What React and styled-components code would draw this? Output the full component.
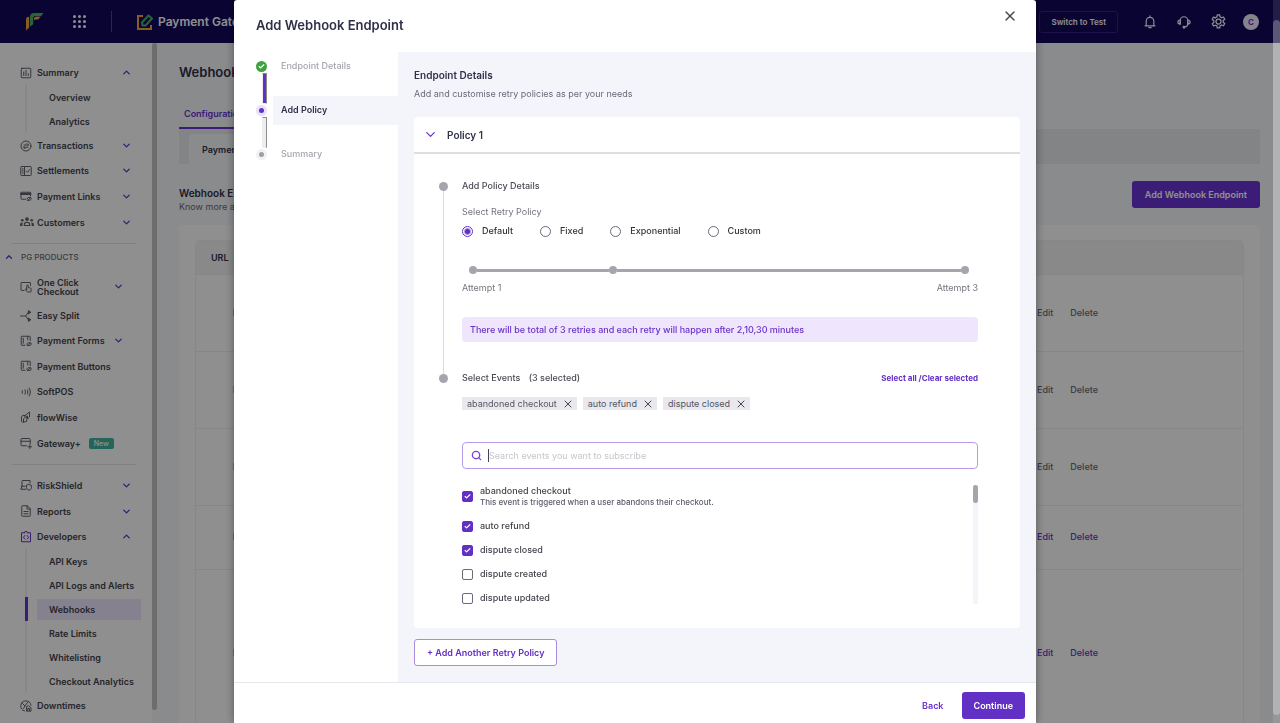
import React, { useState } from "react";
import styled, { createGlobalStyle, css } from "styled-components";
import { Check, ChevronDown, ChevronUp, Search, X } from "lucide-react";

const GlobalStyle = createGlobalStyle`
  *, *::before, *::after {
    box-sizing: border-box;
  }
  body {
    margin: 0;
    overflow: hidden;
    font-family: "Inter", "Liberation Sans", sans-serif;
    font-size: 9px;
    color: #30304a;
  }
  button, input {
    font-family: inherit;
  }
  h1, h2, h3, h4, p, ul, ol {
    margin: 0;
    padding: 0;
  }
  ul, ol {
    list-style: none;
  }
`;

const shapes = {
  summary: (
    <>
      <rect x="2.5" y="2.5" width="19" height="19" rx="1.5" />
      <path d="M7.5 10v7M12 7v10M16.5 13.5V17" />
    </>
  ),
  transactions: (
    <>
      <circle cx="12" cy="12" r="10" />
      <path d="M8 10h8.500M14 7l3 3-1 1M16 14.500H7.500M10 17.500l-3-3 1-1" />
    </>
  ),
  settlements: (
    <>
      <rect x="1.500" y="3" width="21" height="18" rx="1.5" />
      <path d="M9 3v18M4.500 8h2M4.500 12h2M4.500 16h2M12.500 12l2.500 2.500L19 9.500" />
    </>
  ),
  links: (
    <>
      <path d="M11 18.500H3a1 1 0 0 1-1-1V4.500h19V12" />
      <path d="M2 8h19" strokeWidth="4" />
      <path d="M14 18a3 3 0 0 1 3-3h4M22 16a3 3 0 0 1-3 4.500h-4M15.500 21.500l5-6" />
    </>
  ),
  customers: (
    <g fill="currentColor" stroke="none">
      <circle cx="12" cy="7" r="3.200" />
      <circle cx="4" cy="9" r="2.300" />
      <circle cx="20" cy="9" r="2.300" />
      <path
        fillRule="evenodd"
        d="M6.500 19v-3.500c0-2.600 2.500-4 5.500-4s5.500 1.400 5.500 4V19zm2-2h7v-1.500c0-1.200-1.600-2-3.500-2s-3.500.8-3.500 2z"
      />
      <path d="M0 19v-2.500c0-2.200 2-3.700 5-3.500-.7.8-.9 2-.9 3v3zM24 19v-2.500c0-2.200-2-3.700-5-3.500.7.8.9 2 .9 3v3z" />
    </g>
  ),
  click: (
    <>
      <path d="M8 19H3a1 1 0 0 1-1-1V4a1 1 0 0 1 1-1h17a1 1 0 0 1 1 1v5" />
      <path d="M13.500 17V9.500a1.500 1.500 0 0 1 3 0V13l5 1.500c1 .3 1.300 1 1 2l-1 5.500H15l-4.500-5 1-1z" />
    </>
  ),
  split: (
    <>
      <path d="M1 12h10M19 4.500h-2c-3 0-3 7.500-6 7.500 3 0 3 7.500 6 7.500h2" />
      <path d="M17.500 1.500l4 3-4 3zM17.500 16.500l4 3-4 3z" fill="currentColor" />
    </>
  ),
  form: (
    <>
      <path d="M10 20.500H3.500a1 1 0 0 1-1-1v-16a1 1 0 0 1 1-1h16a1 1 0 0 1 1 1V11" />
      <path d="M6.500 6.500v10M15.500 3v7" />
      <path d="M14 19.500a3 3 0 0 1 3-4h4M22 16.500a3 3 0 0 1-3 4.500h-4M15.500 21.500l5-6" />
    </>
  ),
  softpos: <path d="M4.500 9.500v5M10 7.500c1 2.800 1 6.200 0 9M15 8c1 2.600 1 5.400 0 8M18.500 4c2.800 5 2.800 11 0 16" />,
  flow: (
    <>
      <path d="M10 9l9-7v10l-3 3M10 9H5l-2 3v8l2 2.500 8-1.500 1-5M10 9v4l-3 3v6" />
      <path d="M12 12.500l3-2.500v4z" fill="currentColor" />
    </>
  ),
  gateway: (
    <>
      <path d="M13 17.500H4a2 2 0 0 1-2-2V5a2 2 0 0 1 2-2h14.500a2 2 0 0 1 2 2v9" />
      <path d="M2 8.500h18.500M19.500 16v7M16 19.500h7" />
    </>
  ),
  risk: (
    <>
      <path d="M4 14.500V4.500a1.500 1.500 0 0 1 1.500-1.500H20v5M4 14.500h6M4 14.500L1.500 20.500H12" />
      <path d="M18 11l5 2v4c0 2.800-2.500 4.800-5 5.500-2.500-.7-5-2.700-5-5.500v-4z" />
    </>
  ),
  reports: (
    <>
      <path d="M14 1.500H5a1.500 1.500 0 0 0-1.500 1.500v18A1.500 1.500 0 0 0 5 22.500h14a1.500 1.500 0 0 0 1.500-1.500V8z" />
      <path d="M14 1.500V8h6.500M8 13h8M8 17.500h8" />
    </>
  ),
  developers: (
    <>
      <path d="M9 3.500H3v18h18v-18h-6M9 3.500a3 3 0 0 1 6 0" />
      <path d="M9.500 9L7 12.500 9.500 16M14.500 9l2.500 3.500-2.500 3.500" />
    </>
  ),
  downtimes: (
    <>
      <path d="M9 22A10.300 10.300 0 1 1 22 10.500" />
      <path d="M4 6l6 6-3 5M10 12l5-7" />
      <path d="M13 21.500v-8l4-2 5 4v6zM15.500 21v-4h3.500v4" />
    </>
  ),
  bell: <path d="M3.500 18.500h17M5.500 18v-7.500a6.500 6.500 0 0 1 13 0V18M12 4V1.500M10 21.500h4" />,
  headset: (
    <>
      <path d="M5.500 15.500V9.500a6.500 6.500 0 0 1 13 0v6c0 3-2 4.500-4.500 5" />
      <path d="M5.500 8.500C2 8.500 1.500 10 1.500 12s.5 3.500 4 3.500zM18.500 8.500c3.500 0 4 1.500 4 3.500s-.5 3.500-4 3.500z" />
      <circle cx="12" cy="21" r="1.500" />
    </>
  ),
  gear: (
    <>
      <circle cx="12" cy="12" r="4" />
      <path d="M9.500 4.500L10 1.500h4l.5 3 2.500 1.500 3-1.200 2 3.500-2.500 2v3l2.500 2-2 3.500-3-1.200-2.500 1.500-.5 3h-4l-.5-3L7 18l-3 1.200-2-3.500 2.500-2v-3L2 8.500 4 5l3 1.200z" />
    </>
  ),
};

const Icon = ({ name, size = 12, width = 2 }) => (
  <svg
    width={size}
    height={size}
    viewBox="0 0 24 24"
    fill="none"
    stroke="currentColor"
    strokeWidth={width}
    strokeLinecap="round"
    strokeLinejoin="round"
    aria-hidden="true"
  >
    {shapes[name]}
  </svg>
);

const Logo = () => (
  <svg width="18" height="18" viewBox="0 0 18 18" aria-hidden="true">
    <path d="M0 17.500V7c0-2 1-3.200 3.200-3.200V14.500z" fill="#f0a63a" />
    <path d="M4 13.500V4C4 1.500 5.500 0 8 0h9.500L15 3.200H9.200c-1.400 0-2 .6-2 2v6z" fill="#45b36b" />
    <path d="M8 7.200V6c0-1.400.8-2.200 2.200-2.200h4.300l-2.300 2.700H9.500z" fill="#f0a63a" />
  </svg>
);

const GatewayMark = () => (
  <svg width="16" height="16" viewBox="0 0 16 16" fill="none" strokeWidth="2" aria-hidden="true">
    <path d="M6 2H1v13h13v-4" stroke="#f0a63a" />
    <path d="M5 8.500L11.500 1.500l3.500 3-6.500 7H5.500z" stroke="#45b36b" strokeLinejoin="round" />
  </svg>
);

const mainLinks = [
  { icon: "summary", label: "Summary", open: true, items: ["Overview", "Analytics"] },
  { icon: "transactions", label: "Transactions", arrow: true },
  { icon: "settlements", label: "Settlements", arrow: true },
  { icon: "links", label: "Payment Links", arrow: true, tall: true },
  { icon: "customers", label: "Customers", arrow: true, tall: true, big: true },
];

const productLinks = [
  { icon: "click", label: "One Click Checkout", arrow: true, wrap: true },
  { icon: "split", label: "Easy Split" },
  { icon: "form", label: "Payment Forms", arrow: true },
  { icon: "form", label: "Payment Buttons", tall: true },
  { icon: "softpos", label: "SoftPOS" },
  { icon: "flow", label: "flowWise", tall: true },
  { icon: "gateway", label: "Gateway+", tall: true, badge: "New" },
];

const otherLinks = [
  { icon: "risk", label: "RiskShield", arrow: true, tall: true },
  { icon: "reports", label: "Reports", arrow: true, tall: true },
  {
    icon: "developers",
    label: "Developers",
    open: true,
    active: true,
    items: ["API Keys", "API Logs and Alerts", "Webhooks", "Rate Limits", "Whitelisting", "Checkout Analytics"],
  },
  { icon: "downtimes", label: "Downtimes" },
];

const webhooks = [
  { height: 77 },
  { height: 77 },
  { height: 77 },
  { height: 64, editable: true },
  { height: 168, editable: true },
];

const policies = ["Default", "Fixed", "Exponential", "Custom"];

const events = [
  { name: "abandoned checkout", hint: "This event is triggered when a user abandons their checkout." },
  { name: "auto refund" },
  { name: "dispute closed" },
  { name: "dispute created" },
  { name: "dispute updated" },
];

const NavGroup = ({ links, inset }) => (
  <ul>
    {links.map((link) => (
      <li key={link.label}>
        <NavRow type="button" $tall={link.tall} $wrap={link.wrap} $inset={inset}>
          <NavIcon $active={link.active}>
            <Icon name={link.icon} size={link.big ? 14 : 12} />
          </NavIcon>
          <NavLabel $wrap={link.wrap}>{link.label}</NavLabel>
          {link.badge && <Badge>{link.badge}</Badge>}
          {(link.arrow || link.open) && (
            <Arrow>
              {link.open ? <ChevronUp size={11} strokeWidth={3} /> : <ChevronDown size={11} strokeWidth={3} />}
            </Arrow>
          )}
        </NavRow>
        {link.items && (
          <SubList>
            {link.items.map((item) => (
              <SubItem key={item} $active={item === "Webhooks"}>
                <a href="#nav">{item}</a>
              </SubItem>
            ))}
          </SubList>
        )}
      </li>
    ))}
  </ul>
);

const Dashboard = () => (
  <Shell>
    <TopBar>
      <Logo />
      <AppsGrid aria-hidden="true">
        {Array.from({ length: 9 }, (_, i) => (
          <i key={i} />
        ))}
      </AppsGrid>
      <Divider />
      <Product>
        <GatewayMark />
        Payment Gateway
      </Product>
      <TopActions>
        <SwitchButton type="button">Switch to Test</SwitchButton>
        <IconButton type="button" aria-label="Notifications">
          <Icon name="bell" size={14} />
        </IconButton>
        <IconButton type="button" aria-label="Support">
          <Icon name="headset" size={14} />
        </IconButton>
        <IconButton type="button" aria-label="Settings">
          <Icon name="gear" size={15} />
        </IconButton>
      </TopActions>
      <Avatar>C</Avatar>
    </TopBar>
    <Columns>
      <Sidebar>
        <NavGroup links={mainLinks} />
        <Rule $tight />
        <GroupTitle type="button">
          <ChevronUp size={10} strokeWidth={3} />
          <span>PG PRODUCTS</span>
        </GroupTitle>
        <NavGroup links={productLinks} inset />
        <Rule />
        <NavGroup links={otherLinks} />
      </Sidebar>
      <SideScroll />
      <Content>
        <PageTitle>Webhooks</PageTitle>
        <Tab type="button">Configurations</Tab>
        <SubTabs>
          <SubTab type="button">Payment Gateway</SubTab>
        </SubTabs>
        <SectionHead>
          <SectionText>
            <h2>Webhook Endpoints</h2>
            <p>Know more about webhooks</p>
          </SectionText>
          <AddEndpoint type="button">Add Webhook Endpoint</AddEndpoint>
        </SectionHead>
        <TableCard>
          <Table>
            <thead>
              <tr>
                <th>URL</th>
                <ActionsHead>Actions</ActionsHead>
              </tr>
            </thead>
            <tbody>
              {webhooks.map((hook, i) => (
                <Row key={i} $height={hook.height}>
                  <td>
                    <HookUrl>https://</HookUrl>
                  </td>
                  <td>
                    <RowLinks>
                      <RowLink type="button" $enabled={hook.editable}>
                        Edit
                      </RowLink>
                      <RowLink type="button" $enabled={hook.editable}>
                        Delete
                      </RowLink>
                    </RowLinks>
                  </td>
                </Row>
              ))}
            </tbody>
          </Table>
        </TableCard>
      </Content>
    </Columns>
  </Shell>
);

const App = () => {
  const [policy, setPolicy] = useState("Default");
  const [selected, setSelected] = useState(["abandoned checkout", "auto refund", "dispute closed"]);
  const [query, setQuery] = useState("");

  function toggle(name) {
    setSelected((list) => (list.includes(name) ? list.filter((n) => n !== name) : [...list, name]));
  }
  function toggleAll() {
    setSelected(selected.length ? [] : events.map((e) => e.name));
  }

  return (
    <>
      <GlobalStyle />
      <Dashboard />
      <Overlay>
        <Modal role="dialog" aria-labelledby="modal-title">
          <ModalHead>
            <h2 id="modal-title">Add Webhook Endpoint</h2>
            <CloseButton type="button" aria-label="Close">
              <X size={16} strokeWidth={2} />
            </CloseButton>
          </ModalHead>
          <ModalBody>
            <Steps>
              <StepTrack>
                <DoneMark>
                  <Check size={7} strokeWidth={4} />
                </DoneMark>
                <Connector $done />
                <StepMark $current />
                <Connector />
                <StepMark />
              </StepTrack>
              <StepList>
                <Step>Endpoint Details</Step>
                <Step $current>Add Policy</Step>
                <Step>Summary</Step>
              </StepList>
            </Steps>
            <Panel>
              <PanelTitle>Endpoint Details</PanelTitle>
              <PanelText>Add and customise retry policies as per your needs</PanelText>
              <Card>
                <CardHead type="button">
                  <ChevronDown size={15} strokeWidth={2} />
                  <span>Policy 1</span>
                </CardHead>
                <CardBody>
                  <Timeline>
                    <Dot />
                    <TimelineLine />
                  </Timeline>
                  <DetailsBlock>
                    <BlockTitle>Add Policy Details</BlockTitle>
                    <FieldLabel id="retry-label">Select Retry Policy</FieldLabel>
                    <RadioRow role="radiogroup" aria-labelledby="retry-label">
                      {policies.map((name) => (
                        <label key={name}>
                          <Radio
                            type="radio"
                            name="policy"
                            checked={policy === name}
                            onChange={() => setPolicy(name)}
                          />
                          {name}
                        </label>
                      ))}
                    </RadioRow>
                    <Attempts>
                      <AttemptDot />
                      <AttemptLine $grow={5} />
                      <AttemptDot />
                      <AttemptLine $grow={13} />
                      <AttemptDot />
                    </Attempts>
                    <AttemptLabels>
                      <span>Attempt 1</span>
                      <span>Attempt 3</span>
                    </AttemptLabels>
                    <Notice>There will be total of 3 retries and each retry will happen after 2,10,30 minutes</Notice>
                  </DetailsBlock>
                  <Timeline>
                    <Dot />
                  </Timeline>
                  <div>
                    <EventsHead>
                      <BlockTitle>
                        Select Events <span>({selected.length} selected)</span>
                      </BlockTitle>
                      <TextButton type="button" onClick={toggleAll}>
                        Select all /Clear selected
                      </TextButton>
                    </EventsHead>
                    <Chips>
                      {selected.map((name) => (
                        <Chip key={name}>
                          {name}
                          <button type="button" aria-label={`Remove ${name}`} onClick={() => toggle(name)}>
                            <X size={12} strokeWidth={2} />
                          </button>
                        </Chip>
                      ))}
                    </Chips>
                    <SearchBox>
                      <Search size={11} strokeWidth={3} />
                      <Caret />
                      <input
                        type="text"
                        aria-label="Search events"
                        placeholder="Search events you want to subscribe"
                        value={query}
                        onChange={(e) => setQuery(e.target.value)}
                      />
                    </SearchBox>
                    <EventArea>
                      <EventList>
                        {events
                          .filter((event) => event.name.includes(query))
                          .map((event) => (
                            <li key={event.name}>
                              <EventLabel>
                                <CheckBox>
                                  <input
                                    type="checkbox"
                                    checked={selected.includes(event.name)}
                                    onChange={() => toggle(event.name)}
                                  />
                                  {selected.includes(event.name) && <Check size={7} strokeWidth={4} />}
                                </CheckBox>
                                <span>
                                  {event.name}
                                  {event.hint && <small>{event.hint}</small>}
                                </span>
                              </EventLabel>
                            </li>
                          ))}
                      </EventList>
                      <ListScroll>
                        <i />
                      </ListScroll>
                    </EventArea>
                  </div>
                </CardBody>
              </Card>
              <OutlineButton type="button">+ Add Another Retry Policy</OutlineButton>
            </Panel>
          </ModalBody>
          <ModalFoot>
            <BackButton type="button">Back</BackButton>
            <ContinueButton type="button">Continue</ContinueButton>
          </ModalFoot>
        </Modal>
        <PageScroll>
          <i />
        </PageScroll>
      </Overlay>
    </>
  );
};

const plainButton = css`
  border: none;
  background: transparent;
  padding: 0;
  cursor: pointer;
`;

const Shell = styled.div`
  height: 100vh;
  display: flex;
  flex-direction: column;
  overflow: hidden;
  background-color: #f6f8fc;
`;

const TopBar = styled.header`
  flex: none;
  height: 43px;
  display: flex;
  align-items: center;
  padding: 0 21px 0 26px;
  background-color: #12085c;
  color: #fff;
`;

const AppsGrid = styled.div`
  display: grid;
  grid-template-columns: repeat(3, 3px);
  gap: 2px;
  margin-left: 29px;

  i {
    height: 3px;
    border-radius: 50%;
    background-color: #fff;
  }
`;

const Divider = styled.span`
  width: 1px;
  height: 21px;
  margin: 0 25px;
  background-color: #4d4680;
`;

const Product = styled.div`
  display: flex;
  align-items: center;
  gap: 5px;
  font-size: 12px;
  font-weight: 600;
  white-space: nowrap;
`;

const TopActions = styled.div`
  display: flex;
  align-items: center;
  gap: 20px;
  margin: 0 17px 0 auto;
`;

const SwitchButton = styled.button`
  ${plainButton}
  height: 22px;
  padding: 0 11px;
  margin-right: 5px;
  border: 1px solid #3a1f8a;
  border-radius: 3px;
  color: #fff;
  font-size: 8px;
  font-weight: 600;
`;

const IconButton = styled.button`
  ${plainButton}
  display: flex;
  color: #fff;
`;

const Avatar = styled.span`
  width: 16px;
  height: 16px;
  display: grid;
  place-items: center;
  border-radius: 50%;
  background-color: #efeaff;
  color: #6933d3;
  font-size: 8px;
  font-weight: 700;
`;

const Columns = styled.div`
  flex: 1;
  display: flex;
  min-height: 0;
`;

const Sidebar = styled.nav`
  flex: none;
  width: 152px;
  padding-top: 17px;
  overflow: hidden;
  background-color: #fff;
`;

const NavRow = styled.button`
  ${plainButton}
  width: 100%;
  height: ${({ $tall, $wrap }) => ($wrap ? 33 : $tall ? 26 : 25)}px;
  display: flex;
  align-items: center;
  padding: 0 ${({ $inset }) => ($inset ? 28 : 20)}px 0 20px;
  color: #44444c;
  font-size: 9px;
  font-weight: 600;
  text-align: left;
`;

const NavIcon = styled.span`
  width: 17px;
  display: flex;
  color: ${({ $active }) => ($active ? "#6933d3" : "#62626f")};
`;

const NavLabel = styled.span`
  width: ${({ $wrap }) => ($wrap ? "60px" : "auto")};
  line-height: 9px;
  white-space: ${({ $wrap }) => ($wrap ? "normal" : "nowrap")};
`;

const Badge = styled.span`
  margin-left: 8px;
  padding: 0 5px;
  border-radius: 2px;
  background-color: #3fb5a3;
  color: #fff;
  font-size: 7px;
  font-weight: 500;
  line-height: 11px;
`;

const Arrow = styled.span`
  display: flex;
  margin-left: auto;
  color: #6933d3;
`;

const SubList = styled.ul`
  margin-left: 25px;
  border-left: 2px solid #f1f1f3;
`;

const SubItem = styled.li`
  height: 24px;
  display: flex;
  align-items: center;
  padding-left: 9px;
  margin-left: -2px;
  border-left: 3px solid ${({ $active }) => ($active ? "#6933d3" : "transparent")};

  a {
    width: 104px;
    padding-left: 12px;
    background-color: ${({ $active }) => ($active ? "#efe6ff" : "transparent")};
    color: #44444c;
    font-weight: 600;
    line-height: 21px;
    text-decoration: none;
    white-space: nowrap;
  }
`;

const Rule = styled.hr`
  height: 1px;
  margin: 8px 16px ${({ $tight }) => ($tight ? 0 : 7)}px 12px;
  border: none;
  background-color: #e6e6e8;
`;

const GroupTitle = styled.button`
  ${plainButton}
  height: 26px;
  display: flex;
  align-items: center;
  gap: 7px;
  padding-left: 4px;
  color: #6933d3;
  font-size: 8px;
  font-weight: 500;

  span {
    color: #6a6a75;
  }
`;

const SideScroll = styled.div`
  flex: none;
  width: 5px;
  margin-bottom: 13px;
  border-radius: 3px;
  background-color: #c2c2c4;
`;

const Content = styled.main`
  flex: 1;
  min-width: 0;
  padding: 20px 20px 0 22px;
`;

const PageTitle = styled.h1`
  font-size: 13px;
  font-weight: 600;
  line-height: 18px;
`;

const Tab = styled.button`
  ${plainButton}
  display: block;
  width: 80px;
  margin-top: 19px;
  padding: 0 5px;
  border-bottom: 2px solid #6933d3;
  color: #6933d3;
  font-size: 9px;
  font-weight: 600;
  line-height: 27px;
  text-align: left;
`;

const SubTabs = styled.div`
  height: 35px;
  display: flex;
  align-items: flex-end;
  padding-left: 10px;
  border-radius: 0 2px 0 0;
  background-color: #eaebee;
`;

const SubTab = styled.button`
  ${plainButton}
  height: 30px;
  padding: 0 13px;
  border-radius: 3px 0 0 0;
  background-color: #f6f8fc;
  color: #30304a;
  font-size: 9px;
  font-weight: 600;
`;

const SectionHead = styled.div`
  display: flex;
  align-items: flex-start;
  justify-content: space-between;
  margin-top: 17px;
`;

const SectionText = styled.div`
  padding-top: 5px;

  h2 {
    font-size: 10px;
    font-weight: 600;
    line-height: 14px;
  }
  p {
    color: #6a6a75;
    line-height: 13px;
  }
`;

const AddEndpoint = styled.button`
  ${plainButton}
  height: 27px;
  padding: 0 13px;
  border-radius: 3px;
  background-color: #6933d3;
  color: #fff;
  font-size: 9px;
  font-weight: 600;
`;

const TableCard = styled.div`
  margin-top: 12px;
  padding: 15px 16px;
  border-radius: 4px;
  background-color: #fff;
`;

const Table = styled.table`
  width: 100%;
  border: 1px solid #f1f1f3;
  border-radius: 6px;
  border-spacing: 0;
  overflow: hidden;

  th {
    height: 33px;
    padding: 0 15px;
    background-color: #f4f4f6;
    font-size: 9px;
    font-weight: 600;
    text-align: left;
  }
  th + th {
    padding: 0;
  }
`;

const ActionsHead = styled.th`
  width: 240px;
`;

const Row = styled.tr`
  height: ${({ $height }) => $height}px;

  td {
    padding: 0 0 2px;
    border-top: 1px solid #efeff2;
  }
`;

const HookUrl = styled.span`
  padding-left: 37px;
`;

const RowLinks = styled.div`
  display: flex;
  gap: 17px;
  padding-left: 34px;
`;

const RowLink = styled.button`
  ${plainButton}
  color: ${({ $enabled }) => ($enabled ? "#6933d3" : "#6a6a75")};
  font-size: 9px;
  font-weight: 500;
`;

const Overlay = styled.div`
  position: fixed;
  inset: 0;
  display: flex;
  justify-content: center;
  background-color: rgba(0, 0, 0, 0.44);
`;

const PageScroll = styled.div`
  position: absolute;
  top: 0;
  right: 0;
  bottom: 0;
  width: 7px;
  padding: 20px 0 8px;
  background-color: rgba(255, 255, 255, 0.1);

  i {
    display: block;
    height: 100%;
    border-radius: 4px;
    background-color: rgba(255, 255, 255, 0.26);
  }
`;

const Modal = styled.section`
  width: 100%;
  max-width: 802px;
  height: 100%;
  margin-right: 10px;
  display: flex;
  flex-direction: column;
  border-radius: 3px 3px 0 0;
  background-color: #fff;
  box-shadow: 0 0 10px rgba(0, 0, 0, 0.4);
`;

const ModalHead = styled.header`
  flex: none;
  height: 52px;
  display: flex;
  align-items: flex-start;
  justify-content: space-between;
  padding: 8px 18px 0 22px;

  h2 {
    font-size: 13px;
    font-weight: 600;
    line-height: 34px;
  }
`;

const CloseButton = styled.button`
  ${plainButton}
  display: flex;
  color: #44444c;
`;

const ModalBody = styled.div`
  flex: 1;
  display: flex;
`;

const Steps = styled.div`
  flex: none;
  width: 164px;
  display: flex;
  gap: 6px;
  padding-left: 22px;
`;

const StepTrack = styled.div`
  width: 11px;
  display: flex;
  flex-direction: column;
  gap: 1px;
  padding-top: 9px;
`;

const DoneMark = styled.span`
  width: 11px;
  height: 11px;
  display: grid;
  place-items: center;
  border-radius: 50%;
  background-color: #3fa33f;
  color: #fff;
`;

const StepMark = styled.span`
  width: 11px;
  height: 11px;
  border: 3px solid ${({ $current }) => ($current ? "#e9e0fb" : "#f1f1f3")};
  border-radius: 50%;
  background-color: ${({ $current }) => ($current ? "#6230c4" : "#9d9da6")};
`;

const Connector = styled.span`
  width: 5px;
  height: 31px;
  margin-left: 6px;
  border: 1px solid;
  border-color: #8c8c8c #8c8c8c #eee #eee;
  background-color: ${({ $done }) => ($done ? "#6230c4" : "#ebeeee")};
`;

const StepList = styled.ol`
  flex: 1;
  display: flex;
  flex-direction: column;
  gap: 15px;
`;

const Step = styled.li`
  padding-left: 8px;
  padding-bottom: 1px;
  background-color: ${({ $current }) => ($current ? "#f4f5fa" : "transparent")};
  color: ${({ $current }) => ($current ? "#30304a" : "#a5a5ae")};
  font-weight: ${({ $current }) => ($current ? 600 : 500)};
  line-height: 28px;
`;

const Panel = styled.div`
  flex: 1;
  min-width: 0;
  padding: 15px 16px 0;
  background-color: #f4f5fa;
`;

const PanelTitle = styled.h3`
  font-size: 10px;
  font-weight: 600;
  line-height: 16px;
`;

const PanelText = styled.p`
  color: #6a6a7a;
  line-height: 21px;
`;

const Card = styled.section`
  margin: 13px 0 11px;
  border-radius: 4px;
  background-color: #fff;
`;

const CardHead = styled.button`
  ${plainButton}
  width: 100%;
  height: 37px;
  display: flex;
  align-items: center;
  gap: 9px;
  padding-left: 9px;
  border-bottom: 2px solid #dedede;
  color: #6933d3;

  span {
    color: #30304a;
    font-size: 10px;
    font-weight: 600;
  }
`;

const CardBody = styled.div`
  display: grid;
  grid-template-columns: 9px 1fr;
  column-gap: 14px;
  padding: 23px 42px 24px 25px;
`;

const Timeline = styled.div`
  display: flex;
  flex-direction: column;
  align-items: center;
  padding-top: 5px;
`;

const Dot = styled.span`
  width: 9px;
  height: 9px;
  border-radius: 50%;
  background-color: #a5a5ae;
`;

const TimelineLine = styled.span`
  flex: 1;
  width: 1px;
  margin-bottom: -5px;
  background-color: #dcd9e6;
`;

const DetailsBlock = styled.div`
  padding-bottom: 27px;
`;

const BlockTitle = styled.h4`
  color: #4a4a55;
  font-size: 9px;
  font-weight: 500;
  line-height: 17px;

  span {
    margin-left: 6px;
  }
`;

const FieldLabel = styled.p`
  margin-top: 10px;
  color: #75757f;
  line-height: 16px;
`;

const RadioRow = styled.div`
  display: flex;
  gap: 27px;

  label {
    display: flex;
    align-items: center;
    gap: 9px;
    color: #33333b;
    font-weight: 500;
    line-height: 22px;
  }
`;

const Radio = styled.input`
  appearance: none;
  width: 11px;
  height: 11px;
  margin: 0;
  border: 1px solid #6a6a7a;
  border-radius: 50%;

  &:checked {
    border-color: #6230c4;
    background: radial-gradient(circle, #6230c4 0 2px, #fff 4px);
  }
`;

const Attempts = styled.div`
  display: flex;
  align-items: center;
  margin-top: 24px;
  padding: 0 9px 0 7px;
`;

const AttemptDot = styled.span`
  width: 8px;
  height: 8px;
  border-radius: 50%;
  background-color: #a5a5ae;
`;

const AttemptLine = styled.span`
  flex: ${({ $grow }) => $grow};
  height: 3px;
  background-color: #a5a5ae;
`;

const AttemptLabels = styled.div`
  display: flex;
  justify-content: space-between;
  margin-top: 6px;
  color: #75757f;
  line-height: 16px;
`;

const Notice = styled.p`
  margin-top: 21px;
  padding: 0 8px;
  border-radius: 4px;
  background-color: #efe6fd;
  color: #6933c9;
  font-weight: 500;
  line-height: 25px;
`;

const EventsHead = styled.div`
  display: flex;
  align-items: center;
  justify-content: space-between;
`;

const TextButton = styled.button`
  ${plainButton}
  color: #6230c4;
  font-size: 8px;
  font-weight: 700;
`;

const Chips = styled.ul`
  display: flex;
  gap: 6px;
  margin-top: 11px;
`;

const Chip = styled.li`
  height: 13px;
  display: flex;
  align-items: center;
  gap: 5px;
  padding: 0 3px 0 5px;
  background-color: #e8e8ee;
  color: #55555f;

  button {
    ${plainButton}
    display: flex;
    color: #44444c;
  }
`;

const SearchBox = styled.div`
  height: 27px;
  display: flex;
  align-items: center;
  margin-top: 32px;
  padding: 0 8px;
  border: 1px solid #b79be8;
  border-radius: 4px;
  color: #7a48d6;

  input {
    flex: 1;
    padding: 0;
    border: none;
    outline: none;
    background: transparent;
    color: #44444c;
    font-size: 9px;
  }
  input::placeholder {
    color: #c6c6cc;
  }
`;

const Caret = styled.span`
  width: 1px;
  height: 13px;
  margin-left: 6px;
  background-color: #44444c;
`;

const EventArea = styled.div`
  display: flex;
  margin-top: 16px;
`;

const EventList = styled.ul`
  flex: 1;
  display: flex;
  flex-direction: column;
  gap: 12px;
`;

const EventLabel = styled.label`
  display: flex;
  align-items: center;
  gap: 7px;
  color: #44444c;
  font-weight: 500;
  line-height: 12px;

  small {
    display: block;
    color: #5b5b6b;
    font-size: 8px;
    line-height: 11px;
  }
`;

const CheckBox = styled.span`
  display: grid;
  place-items: center;
  color: #fff;

  input,
  svg {
    grid-area: 1 / 1;
  }
  input {
    appearance: none;
    width: 11px;
    height: 11px;
    margin: 0;
    border: 1px solid #6a6a7a;
    border-radius: 2px;
  }
  input:checked {
    border-color: #6230c4;
    background-color: #6230c4;
  }
  svg {
    pointer-events: none;
  }
`;

const ListScroll = styled.div`
  width: 5px;
  background-color: #f4f5fa;

  i {
    display: block;
    height: 18px;
    border-radius: 3px;
    background-color: #a5a5ae;
  }
`;

const OutlineButton = styled.button`
  ${plainButton}
  height: 27px;
  padding: 0 12px;
  border: 1px solid #a98be0;
  border-radius: 3px;
  background-color: #fff;
  color: #6230c4;
  font-size: 9px;
  font-weight: 600;
`;

const ModalFoot = styled.footer`
  flex: none;
  height: 41px;
  display: flex;
  align-items: center;
  justify-content: flex-end;
  gap: 18px;
  padding: 6px 11px 1px;
  border-top: 1px solid #e6e6ec;
`;

const BackButton = styled.button`
  ${plainButton}
  color: #6933c9;
  font-size: 9px;
  font-weight: 600;
`;

const ContinueButton = styled.button`
  ${plainButton}
  height: 27px;
  padding: 0 12px;
  border-radius: 3px;
  background-color: #6230c4;
  color: #fff;
  font-size: 9px;
  font-weight: 600;
`;

export default App;
